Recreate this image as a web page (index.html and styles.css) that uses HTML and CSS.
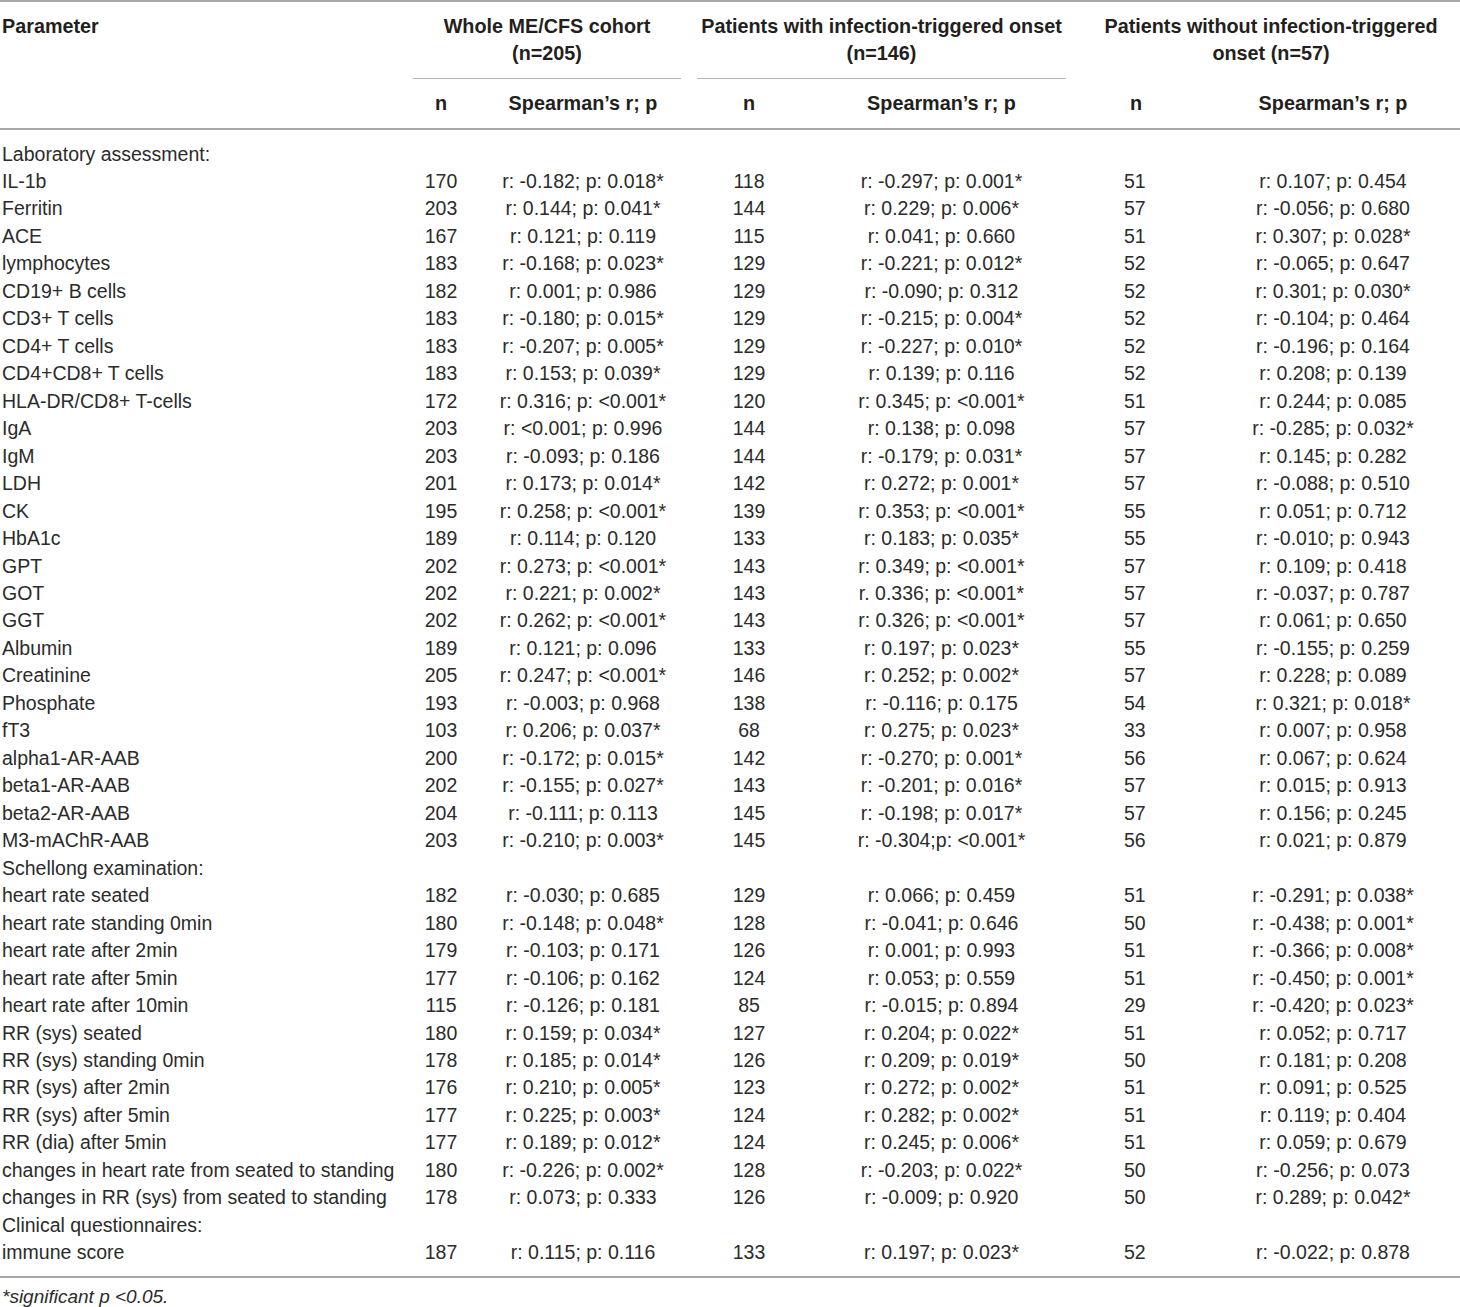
FILE: index.html
```html
<!DOCTYPE html>
<html>
<head>
<meta charset="utf-8">
<link rel="stylesheet" href="styles.css">
</head>
<body>
<table class="tbl">
<colgroup>
<col class="c-param"><col class="c-n1"><col class="c-s1"><col class="c-n2"><col class="c-s2"><col class="c-n3"><col class="c-s3">
</colgroup>
<thead>
<tr class="h1">
<th rowspan="2" class="param-h">Parameter</th>
<th colspan="2" class="grp"><div class="grp-title">Whole ME/CFS cohort<br>(n=205)</div></th>
<th colspan="2" class="grp"><div class="grp-title">Patients with infection-triggered onset<br>(n=146)</div></th>
<th colspan="2" class="grp grp-last"><div class="grp-title nol">Patients without infection-triggered<br>onset (n=57)</div></th>
</tr>
<tr class="h2">
<th>n</th><th>Spearman’s r; p</th>
<th>n</th><th>Spearman’s r; p</th>
<th class="n3">n</th><th class="s3">Spearman’s r; p</th>
</tr>
</thead>
<tbody>
<tr><td class="p">Laboratory assessment:</td><td></td><td></td><td></td><td></td><td></td><td></td></tr>
<tr><td class="p">IL-1b</td><td>170</td><td>r: -0.182; p: 0.018*</td><td>118</td><td>r: -0.297; p: 0.001*</td><td class="n3">51</td><td class="s3">r: 0.107; p: 0.454</td></tr>
<tr><td class="p">Ferritin</td><td>203</td><td>r: 0.144; p: 0.041*</td><td>144</td><td>r: 0.229; p: 0.006*</td><td class="n3">57</td><td class="s3">r: -0.056; p: 0.680</td></tr>
<tr><td class="p">ACE</td><td>167</td><td>r: 0.121; p: 0.119</td><td>115</td><td>r: 0.041; p: 0.660</td><td class="n3">51</td><td class="s3">r: 0.307; p: 0.028*</td></tr>
<tr><td class="p">lymphocytes</td><td>183</td><td>r: -0.168; p: 0.023*</td><td>129</td><td>r: -0.221; p: 0.012*</td><td class="n3">52</td><td class="s3">r: -0.065; p: 0.647</td></tr>
<tr><td class="p">CD19+ B cells</td><td>182</td><td>r: 0.001; p: 0.986</td><td>129</td><td>r: -0.090; p: 0.312</td><td class="n3">52</td><td class="s3">r: 0.301; p: 0.030*</td></tr>
<tr><td class="p">CD3+ T cells</td><td>183</td><td>r: -0.180; p: 0.015*</td><td>129</td><td>r: -0.215; p: 0.004*</td><td class="n3">52</td><td class="s3">r: -0.104; p: 0.464</td></tr>
<tr><td class="p">CD4+ T cells</td><td>183</td><td>r: -0.207; p: 0.005*</td><td>129</td><td>r: -0.227; p: 0.010*</td><td class="n3">52</td><td class="s3">r: -0.196; p: 0.164</td></tr>
<tr><td class="p">CD4+CD8+ T cells</td><td>183</td><td>r: 0.153; p: 0.039*</td><td>129</td><td>r: 0.139; p: 0.116</td><td class="n3">52</td><td class="s3">r: 0.208; p: 0.139</td></tr>
<tr><td class="p">HLA-DR/CD8+ T-cells</td><td>172</td><td>r: 0.316; p: &lt;0.001*</td><td>120</td><td>r: 0.345; p: &lt;0.001*</td><td class="n3">51</td><td class="s3">r: 0.244; p: 0.085</td></tr>
<tr><td class="p">IgA</td><td>203</td><td>r: &lt;0.001; p: 0.996</td><td>144</td><td>r: 0.138; p: 0.098</td><td class="n3">57</td><td class="s3">r: -0.285; p: 0.032*</td></tr>
<tr><td class="p">IgM</td><td>203</td><td>r: -0.093; p: 0.186</td><td>144</td><td>r: -0.179; p: 0.031*</td><td class="n3">57</td><td class="s3">r: 0.145; p: 0.282</td></tr>
<tr><td class="p">LDH</td><td>201</td><td>r: 0.173; p: 0.014*</td><td>142</td><td>r: 0.272; p: 0.001*</td><td class="n3">57</td><td class="s3">r: -0.088; p: 0.510</td></tr>
<tr><td class="p">CK</td><td>195</td><td>r: 0.258; p: &lt;0.001*</td><td>139</td><td>r: 0.353; p: &lt;0.001*</td><td class="n3">55</td><td class="s3">r: 0.051; p: 0.712</td></tr>
<tr><td class="p">HbA1c</td><td>189</td><td>r: 0.114; p: 0.120</td><td>133</td><td>r: 0.183; p: 0.035*</td><td class="n3">55</td><td class="s3">r: -0.010; p: 0.943</td></tr>
<tr><td class="p">GPT</td><td>202</td><td>r: 0.273; p: &lt;0.001*</td><td>143</td><td>r: 0.349; p: &lt;0.001*</td><td class="n3">57</td><td class="s3">r: 0.109; p: 0.418</td></tr>
<tr><td class="p">GOT</td><td>202</td><td>r: 0.221; p: 0.002*</td><td>143</td><td>r. 0.336; p: &lt;0.001*</td><td class="n3">57</td><td class="s3">r: -0.037; p: 0.787</td></tr>
<tr><td class="p">GGT</td><td>202</td><td>r: 0.262; p: &lt;0.001*</td><td>143</td><td>r: 0.326; p: &lt;0.001*</td><td class="n3">57</td><td class="s3">r: 0.061; p: 0.650</td></tr>
<tr><td class="p">Albumin</td><td>189</td><td>r: 0.121; p: 0.096</td><td>133</td><td>r: 0.197; p: 0.023*</td><td class="n3">55</td><td class="s3">r: -0.155; p: 0.259</td></tr>
<tr><td class="p">Creatinine</td><td>205</td><td>r: 0.247; p: &lt;0.001*</td><td>146</td><td>r: 0.252; p: 0.002*</td><td class="n3">57</td><td class="s3">r: 0.228; p: 0.089</td></tr>
<tr><td class="p">Phosphate</td><td>193</td><td>r: -0.003; p: 0.968</td><td>138</td><td>r: -0.116; p: 0.175</td><td class="n3">54</td><td class="s3">r: 0.321; p: 0.018*</td></tr>
<tr><td class="p">fT3</td><td>103</td><td>r: 0.206; p: 0.037*</td><td>68</td><td>r: 0.275; p: 0.023*</td><td class="n3">33</td><td class="s3">r: 0.007; p: 0.958</td></tr>
<tr><td class="p">alpha1-AR-AAB</td><td>200</td><td>r: -0.172; p: 0.015*</td><td>142</td><td>r: -0.270; p: 0.001*</td><td class="n3">56</td><td class="s3">r: 0.067; p: 0.624</td></tr>
<tr><td class="p">beta1-AR-AAB</td><td>202</td><td>r: -0.155; p: 0.027*</td><td>143</td><td>r: -0.201; p: 0.016*</td><td class="n3">57</td><td class="s3">r: 0.015; p: 0.913</td></tr>
<tr><td class="p">beta2-AR-AAB</td><td>204</td><td>r: -0.111; p: 0.113</td><td>145</td><td>r: -0.198; p: 0.017*</td><td class="n3">57</td><td class="s3">r: 0.156; p: 0.245</td></tr>
<tr><td class="p">M3-mAChR-AAB</td><td>203</td><td>r: -0.210; p: 0.003*</td><td>145</td><td>r: -0.304;p: &lt;0.001*</td><td class="n3">56</td><td class="s3">r: 0.021; p: 0.879</td></tr>
<tr><td class="p">Schellong examination:</td><td></td><td></td><td></td><td></td><td></td><td></td></tr>
<tr><td class="p">heart rate seated</td><td>182</td><td>r: -0.030; p: 0.685</td><td>129</td><td>r: 0.066; p: 0.459</td><td class="n3">51</td><td class="s3">r: -0.291; p: 0.038*</td></tr>
<tr><td class="p">heart rate standing 0min</td><td>180</td><td>r: -0.148; p: 0.048*</td><td>128</td><td>r: -0.041; p: 0.646</td><td class="n3">50</td><td class="s3">r: -0.438; p: 0.001*</td></tr>
<tr><td class="p">heart rate after 2min</td><td>179</td><td>r: -0.103; p: 0.171</td><td>126</td><td>r: 0.001; p: 0.993</td><td class="n3">51</td><td class="s3">r: -0.366; p: 0.008*</td></tr>
<tr><td class="p">heart rate after 5min</td><td>177</td><td>r: -0.106; p: 0.162</td><td>124</td><td>r: 0.053; p: 0.559</td><td class="n3">51</td><td class="s3">r: -0.450; p: 0.001*</td></tr>
<tr><td class="p">heart rate after 10min</td><td>115</td><td>r: -0.126; p: 0.181</td><td>85</td><td>r: -0.015; p: 0.894</td><td class="n3">29</td><td class="s3">r: -0.420; p: 0.023*</td></tr>
<tr><td class="p">RR (sys) seated</td><td>180</td><td>r: 0.159; p: 0.034*</td><td>127</td><td>r: 0.204; p: 0.022*</td><td class="n3">51</td><td class="s3">r: 0.052; p: 0.717</td></tr>
<tr><td class="p">RR (sys) standing 0min</td><td>178</td><td>r: 0.185; p: 0.014*</td><td>126</td><td>r: 0.209; p: 0.019*</td><td class="n3">50</td><td class="s3">r: 0.181; p: 0.208</td></tr>
<tr><td class="p">RR (sys) after 2min</td><td>176</td><td>r: 0.210; p: 0.005*</td><td>123</td><td>r: 0.272; p: 0.002*</td><td class="n3">51</td><td class="s3">r: 0.091; p: 0.525</td></tr>
<tr><td class="p">RR (sys) after 5min</td><td>177</td><td>r: 0.225; p: 0.003*</td><td>124</td><td>r: 0.282; p: 0.002*</td><td class="n3">51</td><td class="s3">r: 0.119; p: 0.404</td></tr>
<tr><td class="p">RR (dia) after 5min</td><td>177</td><td>r: 0.189; p: 0.012*</td><td>124</td><td>r: 0.245; p: 0.006*</td><td class="n3">51</td><td class="s3">r: 0.059; p: 0.679</td></tr>
<tr><td class="p">changes in heart rate from seated to standing</td><td>180</td><td>r: -0.226; p: 0.002*</td><td>128</td><td>r: -0.203; p: 0.022*</td><td class="n3">50</td><td class="s3">r: -0.256; p: 0.073</td></tr>
<tr><td class="p">changes in RR (sys) from seated to standing</td><td>178</td><td>r: 0.073; p: 0.333</td><td>126</td><td>r: -0.009; p: 0.920</td><td class="n3">50</td><td class="s3">r: 0.289; p: 0.042*</td></tr>
<tr><td class="p">Clinical questionnaires:</td><td></td><td></td><td></td><td></td><td></td><td></td></tr>
<tr class="last"><td class="p">immune score</td><td>187</td><td>r: 0.115; p: 0.116</td><td>133</td><td>r: 0.197; p: 0.023*</td><td class="n3">52</td><td class="s3">r: -0.022; p: 0.878</td></tr>
</tbody>
</table>
<p class="foot">*significant p &lt;0.05.</p>
</body>
</html>
```
FILE: styles.css
```css
html, body {
  margin: 0;
  padding: 0;
  background: #ffffff;
}
body {
  font-family: "Liberation Sans", Arial, sans-serif;
  color: #231f20;
  width: 1460px;
}
.tbl {
  width: 1460px;
  table-layout: fixed;
  border-collapse: separate;
  border-spacing: 0;
  border-top: 2px solid #a7a7a7;
  border-bottom: 2px solid #a7a7a7;
  font-size: 19.5px;
}
.c-param { width: 405px; }
.c-n1 { width: 72px; }
.c-s1 { width: 212px; }
.c-n2 { width: 120px; }
.c-s2 { width: 265px; }
.c-n3 { width: 132px; }
.c-s3 { width: 254px; }

th {
  font-weight: bold;
  font-size: 19.8px;
  line-height: 27px;
  text-align: center;
  color: #231f20;
}
.h1 th {
  padding: 10.5px 0 0;
  vertical-align: top;
}
.h1 .grp {
  padding: 10.5px 8px 0;
}
.h1 .grp-last {
  padding-left: 16px;
  padding-right: 8px;
}
.grp-title {
  padding-bottom: 11px;
  border-bottom: 1px solid #b4b4b4;
}
.grp-title.nol {
  border-bottom-color: transparent;
}
.param-h {
  text-align: left !important;
  padding-left: 2px !important;
  border-bottom: 2px solid #a7a7a7;
}
.h2 th {
  padding: 11px 0 11px;
  border-bottom: 2px solid #a7a7a7;
}
td {
  padding: 0;
  line-height: 27.475px;
  height: 27.475px;
  text-align: center;
  white-space: nowrap;
  color: #2b2b2b;
}
td.p {
  text-align: left;
  padding-left: 2px;
}
tbody tr:first-child td {
  padding-top: 11px;
}
tbody tr.last td {
  padding-bottom: 9px;
}
.n3 {
  text-align: left;
}
td.n3 {
  padding-left: 50px;
}
th.n3 {
  padding-left: 56px;
}
.foot {
  margin: 5px 0 0 2px;
  font-style: italic;
  font-size: 19px;
  line-height: 27px;
  color: #2b2b2b;
}
```
